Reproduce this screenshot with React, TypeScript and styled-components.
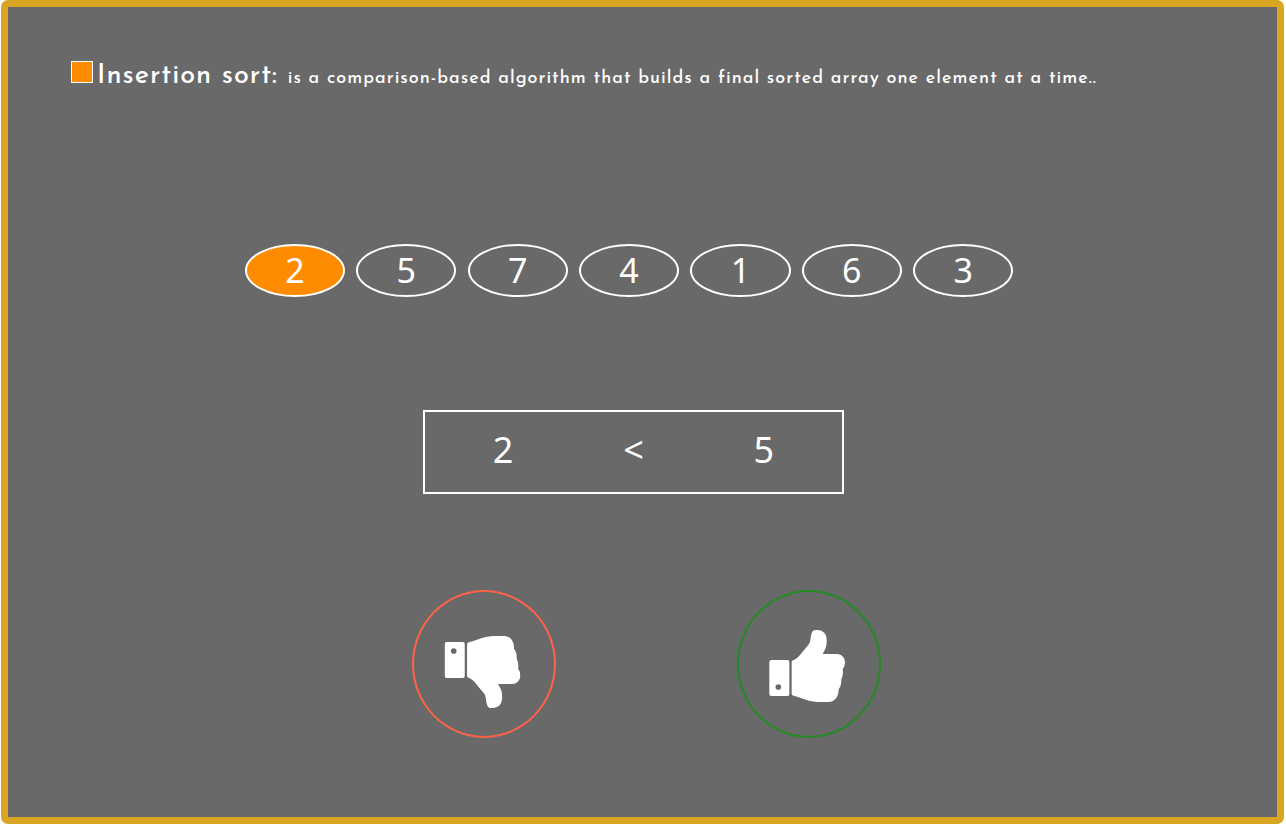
import React from "react";
import styled, { createGlobalStyle } from "styled-components";

const GlobalStyle = createGlobalStyle`
  * { box-sizing: border-box; }
  body { margin: 0; background: #fff; overflow: hidden; }
`;

const Frame = styled.main`
  width: 1283px;
  height: 824px;
  margin-left: 1px;
  padding-top: 50px;
  border: 7px solid goldenrod;
  border-radius: 7px;
  background: dimgray;
  color: #fff;
  display: flex;
  flex-direction: column;
  font-family: "Noto Sans", "Open Sans", sans-serif;
`;

const Header = styled.header`
  display: flex;
  align-items: baseline;
  height: 50px;
  padding-left: 63px;
  font-family: "Josefin Sans", Lato, sans-serif;
  white-space: nowrap;
`;

const Swatch = styled.span`
  align-self: flex-start;
  width: 22px;
  height: 22px;
  margin-top: 4px;
  border: 1px solid #fff;
  background: darkorange;
`;

const Title = styled.h1`
  width: 190.7px;
  margin: 0 0 0 4px;
  font-size: 27px;
  font-weight: 500;
  line-height: 40px;
  letter-spacing: 1px;
`;

const Description = styled.p`
  margin: 0;
  font-size: 18px;
  font-weight: 500;
  line-height: 22px;
  letter-spacing: 1.015px;
`;

const NumberRow = styled.section`
  display: flex;
  gap: 11.25px;
  margin: 137px 0 0 236.8px;
`;

const NumberOval = styled.div<{ $active: boolean }>`
  flex: none;
  width: 100.15px;
  height: 53px;
  border: 2px solid #fff;
  border-radius: 50%;
  background: ${(p) => (p.$active ? "darkorange" : "transparent")};
  font-size: 34px;
  line-height: 48px;
  text-align: center;
`;

const Comparison = styled.section`
  display: grid;
  grid-template-columns: repeat(3, 1fr);
  width: 421px;
  height: 84px;
  margin: 113px 0 0 415px;
  padding: 0 13px;
  border: 2px solid #fff;
  font-size: 36px;
  line-height: 76px;
  text-align: center;
`;

const Votes = styled.section`
  display: flex;
  gap: 181px;
  margin: 96px 0 0 404px;
`;

const VoteButton = styled.button<{ $color: string }>`
  width: 144px;
  height: 148px;
  padding: 0;
  border: 2px solid ${(p) => p.$color};
  border-radius: 50%;
  background: transparent;
  color: #fff;
  display: flex;
  align-items: flex-start;
  justify-content: flex-start;
`;

const ThumbIcon = styled.svg<{ $down?: boolean }>`
  flex: none;
  width: 76px;
  height: 72px;
  margin: ${(p) => (p.$down ? "44px 0 0 30px" : "38px 0 0 30px")};
  transform: ${(p) => (p.$down ? "translateX(0.4px) scaleY(-1)" : "none")};
`;

const Thumb = ({ down }: { down?: boolean }) => (
  <ThumbIcon $down={down} viewBox="132 150 228 216" fill="currentColor" aria-hidden="true">
    <path
      fillRule="evenodd"
      d="M139 240H187Q193 240 193 246V342Q193 348 187 348H139Q133 348 133 342V246Q133 240 139 240ZM160 312.5A8.5 8.5 0 1 0 160 329.5A8.5 8.5 0 1 0 160 312.5Z"
    />
    <path d="M200 246Q200 241 206 240C218 238 237 209 250 195C258 186 256 171 260 160Q263 150 272 150H277C292 150 305 160 305 179V187C305 202 299 211 293 222H336C350 222 360 234 360 248Q360 260 353 268Q356 284 349 297Q350 317 341 328C341 350 330 366 310 366H280C254 366 231 354 208 348Q200 347 200 341Z" />
  </ThumbIcon>
);

const numbers = [2, 5, 7, 4, 1, 6, 3];

export default function App() {
  return (
    <>
      <GlobalStyle />
      <Frame>
        <Header>
          <Swatch />
          <Title>Insertion sort:</Title>
          <Description>
            is a comparison-based algorithm that builds a final sorted array one element at a time..
          </Description>
        </Header>
        <NumberRow>
          {numbers.map((n, i) => (
            <NumberOval key={n} $active={i === 0}>{n}</NumberOval>
          ))}
        </NumberRow>
        <Comparison>
          <span>2</span>
          <span>&lt;</span>
          <span>5</span>
        </Comparison>
        <Votes>
          <VoteButton $color="tomato" aria-label="No"><Thumb down /></VoteButton>
          <VoteButton $color="forestgreen" aria-label="Yes"><Thumb /></VoteButton>
        </Votes>
      </Frame>
    </>
  );
}
